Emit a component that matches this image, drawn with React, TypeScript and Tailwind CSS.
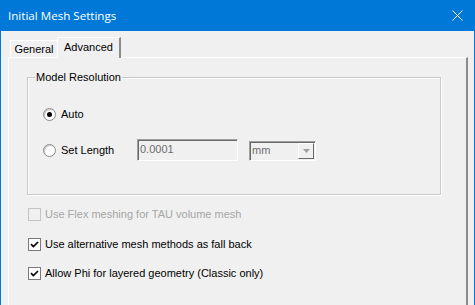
import type { ReactNode } from "react";

const font = { fontFamily: '"Liberation Sans", Arial, sans-serif' };

function Radio({ checked, label }: { checked?: boolean; label: string }) {
  return (
    <div className="flex items-center gap-[5px]">
      <span className="flex h-[13px] w-[13px] items-center justify-center rounded-full border border-[#8a8a8a] bg-white shadow-[inset_1px_1px_0_#c8c8c8]">
        {checked && <span className="h-[5px] w-[5px] rounded-full bg-black" />}
      </span>
      <span className="text-[11px] text-black">{label}</span>
    </div>
  );
}

function Check({
  checked,
  disabled,
  children,
}: {
  checked?: boolean;
  disabled?: boolean;
  children: ReactNode;
}) {
  return (
    <div className="flex h-[13px] items-center gap-[4px]">
      <span
        className={`flex h-[13px] w-[13px] items-center justify-center border ${
          disabled ? "border-[#c4c4c4] bg-[#f0f0f0]" : "border-[#7a7a7a] bg-white"
        }`}
      >
        {checked && (
          <svg width="9" height="9" viewBox="0 0 9 9">
            <path d="M1 4.2 L3.4 6.6 L8 2" fill="none" stroke="#000" strokeWidth="1.7" />
          </svg>
        )}
      </span>
      <span className={`text-[11px] ${disabled ? "text-[#a6a6a6]" : "text-black"}`}>
        {children}
      </span>
    </div>
  );
}

export default function App() {
  return (
    <div
      className="flex h-[305px] w-[475px] flex-col overflow-hidden border-x border-[#0078d7] bg-[#f0f0f0]"
      style={font}
    >
      <div className="flex h-[31px] shrink-0 items-center justify-between bg-[#0078d7] pl-[7px] pr-[11px] text-white">
        <span className="text-[11.6px]" style={{ fontFamily: '"Open Sans", "Noto Sans", sans-serif' }}>
          Initial Mesh Settings
        </span>
        <svg width="11" height="11" viewBox="0 0 11 11">
          <path d="M0.5 0.5 L10.5 10.5 M10.5 0.5 L0.5 10.5" stroke="#fff" strokeWidth="1" />
        </svg>
      </div>

      <div className="flex flex-1 flex-col pl-[7px] pr-[6px] pt-[6px]">
        <div className="flex h-[20px] items-end pl-[2px]">
          <div className="flex h-[17px] w-[47px] items-center justify-center border-l border-t border-white text-[11px] text-black">
            <span className="pt-[1px]">General</span>
          </div>
          <div className="relative z-10 -mb-[1px] flex h-[21px] w-[64px] items-center justify-center border-l border-t border-r-2 border-white border-r-[#8c8c8c] bg-[#f0f0f0] text-[11px] text-black">
            <span className="-mt-[1px]">Advanced</span>
          </div>
        </div>

        <div className="flex flex-1 flex-col border-l border-t border-r-2 border-white border-r-[#8c8c8c] pl-[18px] pt-[19px]">
          <div className="relative h-[118px] w-[414px] border border-[#c9c9c9] shadow-[1px_1px_0_#fff,inset_1px_1px_0_#fff]">
            <span className="absolute -top-[8px] left-[7px] bg-[#f0f0f0] px-[1px] text-[11px] leading-[14px] text-black">
              Model Resolution
            </span>
            <div className="flex flex-col pl-[15px] pt-[28px]">
              <Radio checked label="Auto" />
              <div className="mt-[18px] flex items-center">
                <div className="w-[94px]">
                  <Radio label="Set Length" />
                </div>
                <div className="-mt-[2px] flex h-[22px] w-[101px] items-center border border-[#a0a0a0] border-b-white border-r-white pl-[2px] shadow-[inset_1px_1px_0_#696969] text-[11px] text-[#6d6d6d]">
                  0.0001
                </div>
                <div className="ml-[11px] flex h-[20px] w-[67px] items-center justify-between border border-[#a0a0a0] border-b-white border-r-white pl-[2px] pr-[1px] shadow-[inset_1px_1px_0_#696969] text-[11px] text-[#6d6d6d]">
                  <span>mm</span>
                  <span className="flex h-[16px] w-[16px] items-center justify-center border border-white border-b-[#696969] border-r-[#696969] bg-[#f0f0f0]">
                    <svg width="7" height="4" viewBox="0 0 7 4">
                      <path d="M0 0 L7 0 L3.5 4 Z" fill="#a0a0a0" />
                    </svg>
                  </span>
                </div>
              </div>
            </div>
          </div>

          <div className="mt-[13px] flex flex-col pl-[1px]">
            <Check disabled>Use Flex meshing for TAU volume mesh</Check>
            <div className="mt-[17px]">
              <Check checked>Use alternative mesh methods as fall back</Check>
            </div>
            <div className="mt-[16px]">
              <Check checked>Allow Phi for layered geometry (Classic only)</Check>
            </div>
          </div>
        </div>
      </div>
    </div>
  );
}
